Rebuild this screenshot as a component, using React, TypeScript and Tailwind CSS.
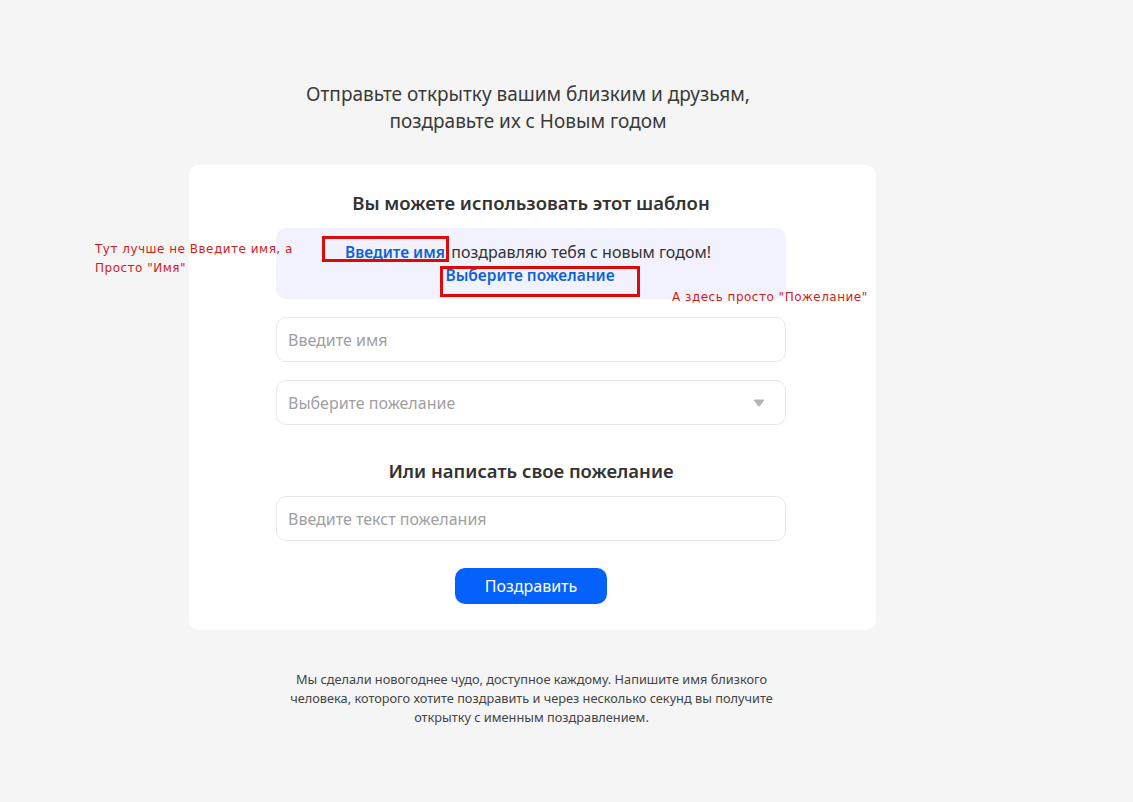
export default function App() {
  return (
    <div className="relative h-[802px] w-full overflow-hidden bg-[#f5f5f5] font-['Noto_Sans',sans-serif] text-[#333333]">
      <div className="ml-[189px] flex w-[687px] flex-col items-center pt-[81px]">
        <h1 className="pr-[9px] text-center text-[19px] leading-[27px] text-[#3a3a3a]">
          Отправьте открытку вашим близким и друзьям,
          <br />
          поздравьте их с Новым годом
        </h1>

        <div className="mt-[30px] flex h-[465px] w-full flex-col items-center rounded-[10px] bg-white pl-[87px] pr-[90px] pt-[24px]">
          <h2 className="text-[18.5px] font-semibold leading-[28px]">Вы можете использовать этот шаблон</h2>

          <div className="mt-[11px] h-[71px] w-full rounded-[10px] bg-[#f1f2fd] pt-[13px] text-center text-[16px] leading-[23px]">
            <p className="pr-[6px]">
              <span className="mr-[2px] text-[15.5px] font-semibold text-[#0f62d6]">Введите имя</span> поздравляю тебя с новым годом!
            </p>
            <p className="pr-[2px] text-[15.5px] font-semibold text-[#0f62d6]">Выберите пожелание</p>
          </div>

          <div className="mt-[18px] flex h-[45px] w-full items-center rounded-[10px] border border-[#e8e8e8] px-[11px] text-[16px] text-[#a0a0a0]">
            Введите имя
          </div>

          <div className="mt-[18px] flex h-[45px] w-full items-center justify-between rounded-[10px] border border-[#e8e8e8] pl-[11px] pr-[20px] text-[16px] text-[#a0a0a0]">
            Выберите пожелание
            <svg width="12" height="8" viewBox="0 0 13 9" className="fill-[#b5b5b5]">
              <path d="M1.5 0.5h10q1.2 0 .7 1.2l-4.6 6.1q-1.1 1-2.2 0L.8 1.7Q.3.5 1.5.5z" />
            </svg>
          </div>

          <h2 className="mt-[32px] text-[18.5px] font-semibold leading-[28px]">Или написать свое пожелание</h2>

          <div className="mt-[11px] flex h-[45px] w-full items-center rounded-[10px] border border-[#e8e8e8] px-[11px] text-[16px] text-[#a0a0a0]">
            Введите текст пожелания
          </div>

          <button className="mt-[27px] h-[36px] w-[152px] rounded-[10px] bg-[#0561fc] text-[16px] text-white">
            Поздравить
          </button>
        </div>

        <p className="mt-[40px] w-[500px] pr-[2px] text-center text-[12.75px] leading-[19px] text-[#444444]">
          Мы сделали новогоднее чудо, доступное каждому. Напишите имя близкого человека, которого хотите поздравить и через несколько секунд вы получите открытку с именным поздравлением.
        </p>
      </div>

      {/* red review marks on top of the page */}
      <div className="absolute left-[322px] top-[236px] h-[26px] w-[127px] border-[3px] border-[#dd0a0a]" />
      <div className="absolute left-[440px] top-[266px] h-[31px] w-[200px] border-[3px] border-[#dd0a0a]" />
      <p className="absolute left-[95px] top-[240px] w-[215px] font-['DejaVu_Sans',sans-serif] text-[12px] leading-[19px] tracking-[0.5px] text-[#d01c1c]">
        Тут лучше не Введите имя, а Просто "Имя"
      </p>
      <p className="absolute left-[672px] top-[288px] whitespace-nowrap font-['DejaVu_Sans',sans-serif] text-[12px] leading-[19px] tracking-[0.5px] text-[#d01c1c]">
        А здесь просто "Пожелание"
      </p>
    </div>
  );
}
